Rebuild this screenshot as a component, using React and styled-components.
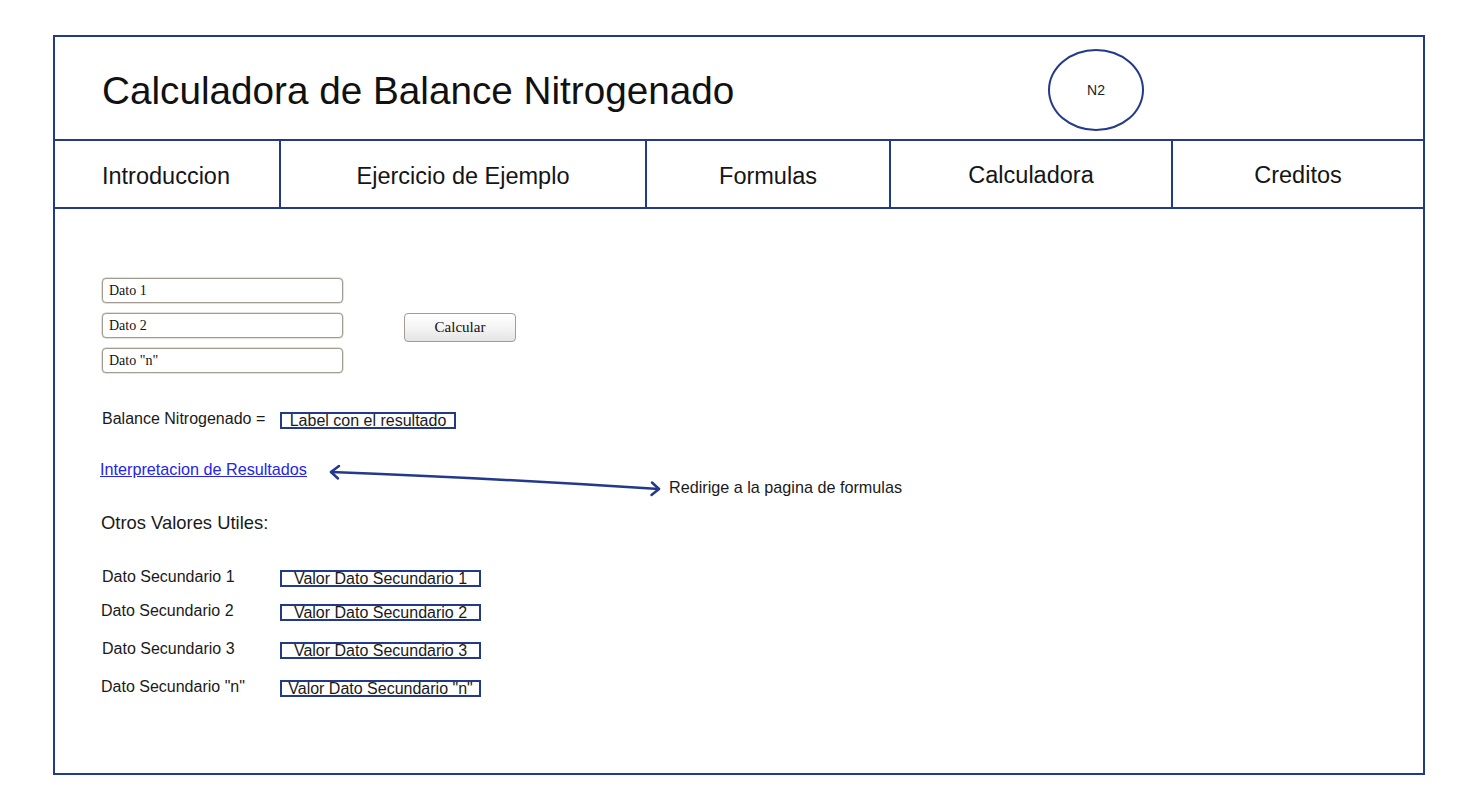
import React from 'react'
import styled, { createGlobalStyle } from 'styled-components'

const NAVY = '#233a8a'

const GlobalStyle = createGlobalStyle`
  html, body {
    margin: 0;
    padding: 0;
    background: #ffffff;
  }
  body {
    font-family: "Liberation Sans", Arial, sans-serif;
    color: #1a1a1a;
  }
`

const Page = styled.div`
  padding: 35px 0 0 53px;
`

const Frame = styled.div`
  width: 1372px;
  height: 740px;
  box-sizing: border-box;
  border: 2px solid ${NAVY};
  display: flex;
  flex-direction: column;
`

const Header = styled.header`
  height: 102px;
  border-bottom: 2px solid ${NAVY};
  display: flex;
  align-items: center;
  padding-left: 47px;
`

const Title = styled.h1`
  flex: 1;
  margin: 0;
  font-size: 38.7px;
  font-weight: 400;
  color: #111;
  line-height: 1;
  margin-top: 6px;
`

const Logo = styled.div`
  width: 92px;
  height: 78px;
  border: 2px solid ${NAVY};
  border-radius: 50%;
  display: flex;
  align-items: center;
  justify-content: center;
  font-size: 14px;
  color: #222;
  margin-right: 279px;
  margin-top: 3px;
`

const Nav = styled.nav`
  height: 66px;
  border-bottom: 2px solid ${NAVY};
  display: grid;
  grid-template-columns: 224px 366px 244px 282px 252px;
`

const NavItem = styled.div`
  display: flex;
  align-items: center;
  justify-content: center;
  font-size: 23.5px;
  color: #151515;
  border-left: ${({ $first }) => ($first ? 'none' : `2px solid ${NAVY}`)};
  padding-top: ${({ $drop }) => $drop || 0}px;
  padding-right: ${({ $first }) => ($first ? 2 : 0)}px;
`

const Content = styled.main`
  padding: 69px 0 0 47px;
  display: flex;
  flex-direction: column;
`

const FormRow = styled.div`
  display: flex;
  align-items: center;
`

const Inputs = styled.div`
  display: flex;
  flex-direction: column;
  gap: 10px;
`

const Field = styled.input`
  width: 241px;
  height: 25px;
  box-sizing: border-box;
  border: 1px solid #a39c91;
  box-shadow: 0 0 0 0.5px #c9c3ba;
  border-radius: 4px;
  padding: 0 6px;
  font-family: "Liberation Serif", "Times New Roman", serif;
  font-size: 14px;
  color: #111;
  background: #fff;
  &::placeholder {
    color: #111;
    opacity: 1;
  }
`

const Button = styled.button`
  margin-left: 61px;
  margin-top: 4px;
  width: 112px;
  height: 29px;
  border: 1px solid #a39c91;
  border-radius: 4px;
  background: linear-gradient(180deg, #ffffff 0%, #f3f3f3 55%, #e4e4e4 100%);
  font-family: "Liberation Serif", "Times New Roman", serif;
  font-size: 15px;
  color: #111;
  padding: 0;
`

const ResultRow = styled.div`
  display: flex;
  align-items: center;
  height: 18px;
  margin-top: ${({ $top }) => $top}px;
  margin-left: ${({ $shift }) => $shift || 0}px;
`

const ResultLabel = styled.span`
  width: ${({ $shift }) => 178 - ($shift || 0)}px;
  font-size: 16px;
  line-height: 18px;
  margin-top: -3px;
`

const ValueBox = styled.span`
  display: inline-block;
  width: ${({ $w }) => $w}px;
  height: 13px;
  line-height: 13px;
  border: 2px solid ${NAVY};
  font-size: 16px;
  text-align: center;
  white-space: nowrap;
  overflow: visible;
  color: #1a1a1a;
`

const LinkRow = styled.div`
  display: flex;
  align-items: flex-start;
  margin-top: 32px;
  margin-left: -2px;
`

const Link = styled.a`
  font-size: 16.2px;
  line-height: 17px;
  color: #2424ee;
  text-decoration: underline;
  cursor: pointer;
`

const Arrow = styled.svg`
  margin-left: 13px;
  flex: none;
`

const Note = styled.span`
  margin-left: 4px;
  margin-top: 18px;
  font-size: 16.2px;
  line-height: 17px;
  color: #1a1a1a;
`

const Subtitle = styled.h2`
  margin: 16px 0 0 -1px;
  font-size: 18.4px;
  font-weight: 400;
  line-height: 20px;
  color: #1a1a1a;
`

const secondary = [
  { label: 'Dato Secundario 1', value: 'Valor Dato Secundario 1', top: 36, shift: 0 },
  { label: 'Dato Secundario 2', value: 'Valor Dato Secundario 2', top: 16, shift: -1 },
  { label: 'Dato Secundario 3', value: 'Valor Dato Secundario 3', top: 20, shift: 0 },
  { label: 'Dato Secundario "n"', value: 'Valor Dato Secundario "n"', top: 20, shift: -1 },
]

const navItems = [
  { label: 'Introduccion', drop: 5 },
  { label: 'Ejercicio de Ejemplo', drop: 4 },
  { label: 'Formulas', drop: 5 },
  { label: 'Calculadora', drop: 2 },
  { label: 'Creditos', drop: 2 },
]

const App = () => (
  <Page>
    <GlobalStyle />
    <Frame>
      <Header>
        <Title>Calculadora de Balance Nitrogenado</Title>
        <Logo>N2</Logo>
      </Header>
      <Nav>
        {navItems.map((item, i) => (
          <NavItem key={item.label} $first={i === 0} $drop={item.drop}>
            {item.label}
          </NavItem>
        ))}
      </Nav>
      <Content>
        <FormRow>
          <Inputs>
            <Field placeholder="Dato 1" />
            <Field placeholder="Dato 2" />
            <Field placeholder={'Dato "n"'} />
          </Inputs>
          <Button>Calcular</Button>
        </FormRow>

        <ResultRow $top={38}>
          <ResultLabel>Balance Nitrogenado =</ResultLabel>
          <ValueBox $w={172}>Label con el resultado</ValueBox>
        </ResultRow>

        <LinkRow>
          <Link>Interpretacion de Resultados</Link>
          <Arrow width="345" height="36" viewBox="0 0 345 36">
            <g fill="none" stroke={NAVY} strokeWidth="2.5" strokeLinecap="round" strokeLinejoin="round">
              <path d="M11 11 Q 170 17 339 28" />
              <path d="M19 5 L11 11 L18 17.5" />
              <path d="M332 21.5 L339 28 L331.5 34" />
            </g>
          </Arrow>
          <Note>Redirige a la pagina de formulas</Note>
        </LinkRow>

        <Subtitle>Otros Valores Utiles:</Subtitle>

        {secondary.map((row) => (
          <ResultRow key={row.label} $top={row.top} $shift={row.shift}>
            <ResultLabel $shift={row.shift}>{row.label}</ResultLabel>
            <ValueBox $w={197}>{row.value}</ValueBox>
          </ResultRow>
        ))}
      </Content>
    </Frame>
  </Page>
)

export default App
